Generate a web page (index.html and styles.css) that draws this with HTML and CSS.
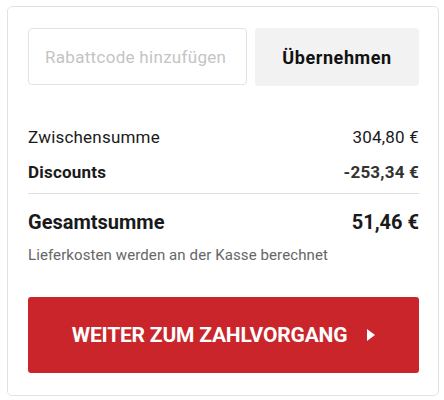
FILE: index.html
```html
<!DOCTYPE html>
<html lang="de">
<head>
<meta charset="utf-8">
<link rel="stylesheet" href="styles.css">
</head>
<body>
<div class="card">
  <div class="coupon">
    <input class="coupon-input" type="text" placeholder="Rabattcode hinzufügen">
    <button class="coupon-btn">Übernehmen</button>
  </div>
  <div class="rows">
    <div class="row"><span>Zwischensumme</span><span>304,80 €</span></div>
    <div class="row bold"><span>Discounts</span><span class="discount">-253,34 €</span></div>
  </div>
  <hr class="divider">
  <div class="row total"><span>Gesamtsumme</span><span>51,46 €</span></div>
  <p class="note">Lieferkosten werden an der Kasse berechnet</p>
  <button class="checkout">WEITER ZUM ZAHLVORGANG
    <svg class="arrow" width="8" height="12" viewBox="0 0 8 12"><path d="M0 0 L8 6 L0 12 Z" fill="#fff"/></svg>
  </button>
</div>
</body>
</html>
```
FILE: styles.css
```css
* { box-sizing: border-box; }
body {
  margin: 0;
  background: #fff;
  font-family: Roboto, "Liberation Sans", sans-serif;
  color: #1a1a1a;
}
.card {
  margin: 6px 0 0 7px;
  width: 432px;
  height: 390px;
  border: 1px solid #e2e2e2;
  border-radius: 5px;
  padding: 21px 19px 0 20px;
}
.coupon {
  display: flex;
  gap: 8px;
  height: 57px;
}
.coupon-input {
  width: 219px;
  height: 57px;
  border: 1px solid #e3e3e3;
  border-radius: 4px;
  padding: 0 0 0 16px;
  font-family: inherit;
  font-size: 17px;
  letter-spacing: 0.3px;
  color: #1a1a1a;
  outline: none;
}
.coupon-input::placeholder { color: #c4c4c4; }
.coupon-btn {
  flex: 1;
  height: 58px;
  border: none;
  border-radius: 4px;
  background: #f2f2f2;
  font-family: inherit;
  font-weight: 700;
  font-size: 18px;
  letter-spacing: 0.6px;
  color: #111;
}
.rows { margin-top: 34px; }
.row {
  display: flex;
  justify-content: space-between;
  align-items: center;
  height: 35px;
  font-size: 17px;
  letter-spacing: 0.2px;
}
.row.bold { font-weight: 700; }
.discount { color: #333; }
.divider {
  margin: 4px 0 0;
  border: none;
  border-top: 1px solid #dedede;
}
.row.total {
  margin-top: 14px;
  height: 28px;
  font-size: 20px;
  letter-spacing: 0;
  font-weight: 700;
}
.note {
  margin: 9px 0 0;
  line-height: 20px;
  font-size: 15px;
  letter-spacing: 0.1px;
  color: #666;
}
.checkout {
  margin-top: 32px;
  width: 100%;
  height: 76px;
  border: none;
  border-radius: 3px;
  background: #c9252a;
  color: #fff;
  font-family: inherit;
  font-weight: 700;
  font-size: 21px;
  letter-spacing: -0.2px;
  display: flex;
  align-items: center;
  justify-content: center;
  gap: 20px;
}
.arrow { display: block; }
```
